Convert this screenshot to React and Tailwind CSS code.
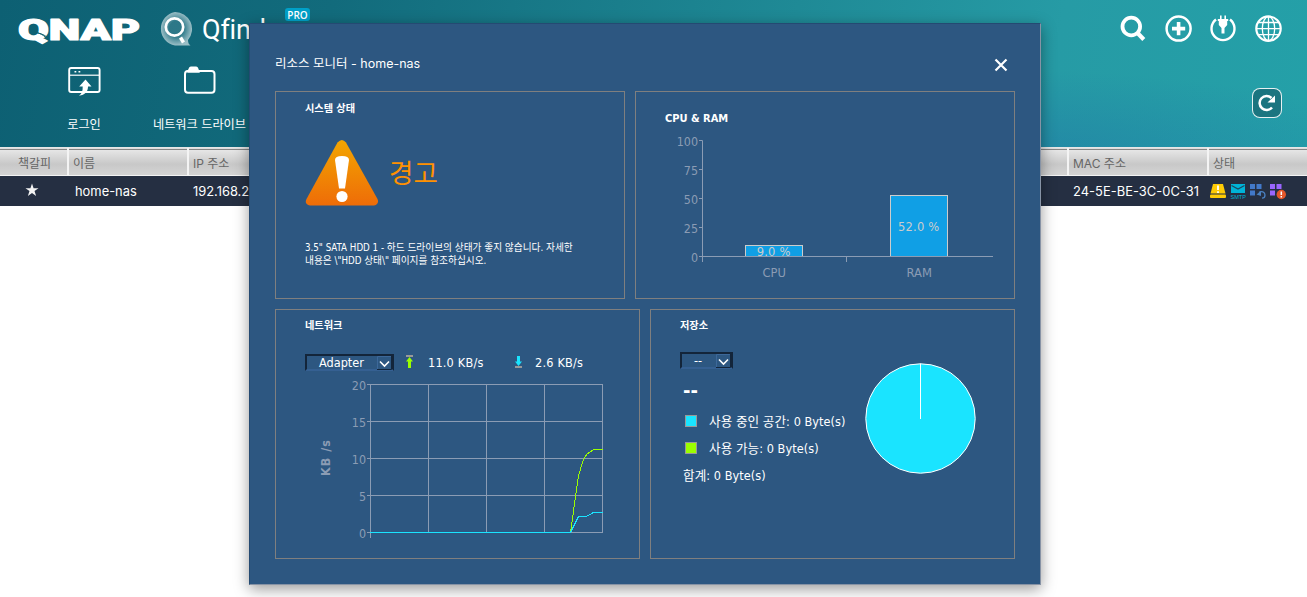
import React from "react";

const UI = "font-['Inter','Noto_Sans_CJK_KR',sans-serif]";
const DLG = "font-['DejaVu_Sans_Condensed','Noto_Sans_CJK_KR',sans-serif]";

function Logo() {
  return (
    <svg className="block h-[40px] w-[126px]" viewBox="16 9 126 40">
      <text x="18" y="39.5" textLength="122" lengthAdjust="spacingAndGlyphs" fontFamily="Roboto, sans-serif" fontWeight="900" fontSize="29" fill="#fff" stroke="#fff" strokeWidth="1.2" strokeLinejoin="round">QNAP</text>
      <path d="M34 32c6 1 10 3 14 8M38 33c5 1 8 3 11 6" fill="none" stroke="#10616f" strokeWidth="1" />
    </svg>
  );
}

function FinderMark() {
  return (
    <svg className="block h-[36px] w-[36px]" viewBox="158 11 36 36">
      <defs>
        <radialGradient id="lens">
          <stop offset=".45" stopColor="#fff" stopOpacity=".12" />
          <stop offset="1" stopColor="#fff" stopOpacity=".58" />
        </radialGradient>
      </defs>
      <path d="M176 12a17 17 0 0 1 13 28q0 4 2.500 5.500H176a17 17 0 0 1 0-33.500Z" fill="url(#lens)" />
      <circle cx="175.500" cy="27" r="8.700" fill="none" stroke="#fff" strokeWidth="2.700" />
      <path d="m181.500 37.500 3 5" stroke="#fff" strokeWidth="3.500" />
    </svg>
  );
}

function ToolIcons() {
  return (
    <svg className="block h-[32px] w-[170px]" viewBox="1116 12 170 32" fill="none" stroke="#fff">
      <circle cx="1131.300" cy="26.500" r="8.800" strokeWidth="3.800" />
      <path d="m1137.500 33 6.300 6.500" strokeWidth="4.200" />
      <circle cx="1178.600" cy="28.600" r="12" strokeWidth="2.500" />
      <path d="M1178.600 22v13.200M1172 28.600h13.200" strokeWidth="3.600" />
      <path d="M1216 19.500a11.500 11.500 0 1 0 14 0" strokeWidth="2.400" />
      <path d="M1220.800 15.500v5M1225.200 15.500v5" strokeWidth="1.600" />
      <path d="M1217.800 19h10.400v2h-1v4l-2.700 3v5.500h-3V28l-2.700-3v-4h-1z" fill="#fff" stroke="none" />
      <circle cx="1268.500" cy="28.600" r="12.200" strokeWidth="2.200" />
      <path d="M1268.500 16.500v24M1256.500 28.600h24M1258 22.500h21M1258 34.700h21" strokeWidth="1.300" />
      <ellipse cx="1268.500" cy="28.600" rx="6.200" ry="12" strokeWidth="1.300" />
    </svg>
  );
}

function LoginIcon() {
  return (
    <svg className="block h-[32px] w-[34px]" viewBox="67 65 34 32" fill="none" stroke="#fff">
      <rect x="69.200" y="68" width="30.400" height="24" rx="2" strokeWidth="1.900" />
      <path d="M70 75.200h29" strokeWidth="1.200" />
      <path d="M74.500 71.700h1.800M78.500 71.700h1.800" strokeWidth="1.600" />
      <path d="M85.500 79.500l6 7H88c0 5-3 8.500-9 9.300 3-2.300 3.800-5 3.700-9.300h-3.500z" fill="#fff" stroke="none" />
    </svg>
  );
}

function FolderIcon() {
  return (
    <svg className="block h-[32px] w-[34px]" viewBox="183 65 34 32">
      <path d="M186.500 70.500c1 0 1.500 0 2-1.500s1-2.500 2.500-2.500h5c1.500 0 2 1 2.500 2.500s1 1.700 2 1.700l-1 2h-12z" fill="#fff" />
      <rect x="185" y="71" width="29.500" height="21.800" rx="3" fill="none" stroke="#fff" strokeWidth="2" />
    </svg>
  );
}

function StatusIcons() {
  return (
    <svg className="block h-[20px] w-[80px]" viewBox="1208 181 80 20">
      <path d="M1213 184h10l2.500 9.500h-15z" fill="#ffcb05" />
      <rect x="1210" y="194.500" width="16" height="3.500" rx="1" fill="#ffcb05" />
      <path d="M1218 185.500v4.500M1218 191.200v1.800" stroke="#fff" strokeWidth="1.800" />
      <rect x="1231" y="184" width="14" height="9" fill="#00b4d8" />
      <path d="m1231.500 185.500 6.500 3.500 6.500-3.500" fill="none" stroke="#1c4960" strokeWidth="1.200" />
      <text x="1230.500" y="199" textLength="15.500" lengthAdjust="spacingAndGlyphs" fill="#00b4d8" fontFamily="Liberation Sans, sans-serif" fontSize="6">SMTP</text>
      <path d="M1250 184h5v5h-5zM1256.500 184h5v5h-5zM1250 190.500h5v5h-5z" fill="#4279c9" />
      <path d="M1259 192.500c2.500-2 6-.5 6 2.500 0 2-1.500 3.200-3 3.200" fill="none" stroke="#4a80c0" strokeWidth="1.300" />
      <path d="m1256.500 194.500 4.500-3.500v5z" fill="#4a80c0" />
      <path d="M1270 184h5v5h-5zM1276.500 184h5v5h-5zM1270 190.500h5v5h-5z" fill="#9966ff" />
      <circle cx="1281.300" cy="194.500" r="4.700" fill="#e4572a" />
      <path d="M1281.300 191.500v3.500M1281.300 196v1.500" stroke="#fff" strokeWidth="1.500" />
    </svg>
  );
}

function Tool({ icon, label, className }) {
  return (
    <div className={"flex shrink-0 flex-col items-center " + className}>
      {icon}
      <span className="mt-[19px] text-[12.2px] leading-[18px] whitespace-nowrap text-white">{label}</span>
    </div>
  );
}

function Header() {
  return (
    <header className="flex h-[147px] justify-between bg-[radial-gradient(ellipse_420px_90px_at_1000px_160px,rgba(30,110,165,0.45),transparent),linear-gradient(100deg,#0d6073_0%,#126b7c_25%,#1f8a96_60%,#269ba5_80%,#24a0a8_100%)]">
      <div className="flex flex-col">
        <div className="flex h-[56px] items-start pt-[9px] pl-[16px]">
          <Logo />
          <div className="mt-[2px] ml-[15px]"><FinderMark /></div>
          <span className="mt-[5px] ml-[9px] w-[83px] font-['Roboto'] text-[27px] leading-[32px] font-normal tracking-[-0.2px] text-white">Qfinder</span>
          <span className="-mt-px h-[13px] w-[25px] rounded-[3px] bg-[#00a0c8] text-center font-['Open_Sans'] text-[10px] leading-[14px] font-semibold text-white">PRO</span>
        </div>
        <div className="flex pt-[9px]">
          <Tool className="ml-[34px] w-[100px]" label="로그인" icon={<LoginIcon />} />
          <Tool className="ml-[15px] w-[101px]" label="네트워크 드라이브" icon={<FolderIcon />} />
        </div>
      </div>
      <div className="flex flex-col items-end pt-[12px] pr-[21px]">
        <ToolIcons />
        <div className="mt-[44px] mr-[4px] flex h-[30px] w-[30px] items-center justify-center rounded-[8px] border border-white/90 bg-[#1b7580]">
          <svg className="h-[22px] w-[22px]" viewBox="0 0 22 22">
            <path d="M16 15.500A7 7 0 1 1 15.500 6" fill="none" stroke="#fff" strokeWidth="2.500" />
            <path d="M19 3.500v7h-7.500z" fill="#fff" />
          </svg>
        </div>
      </div>
    </header>
  );
}

function Head({ children, className }) {
  return <div className={"shrink-0 border-r-2 border-[#f4f4f4] pt-[4px] text-[12px] leading-[23px] whitespace-nowrap text-[#666] " + className}>{children}</div>;
}

function DeviceTable() {
  return (
    <div>
      <div className="flex h-[29px] border-t border-b border-t-[#e6e6e6] border-b-[#f4f4f4] bg-[linear-gradient(to_bottom,#dedede_0,#dedede_1px,#858585_1px,#858585_2px,#e6e6e6_2px,#c8c8c8_60%,#d4d4d4_100%)]">
        <Head className="w-[69px] pl-[18px]">책갈피</Head>
        <Head className="w-[120px] pl-[4px]">이름</Head>
        <Head className="w-[880px] pl-[4px]">IP 주소</Head>
        <Head className="w-[140px] pl-[4px]">MAC 주소</Head>
        <div className="pt-[4px] pl-[4px] text-[12px] leading-[23px] text-[#666]">상태</div>
      </div>
      <div className="flex h-[30px] items-center bg-[#252f42] text-[12.9px] text-white">
        <div className="w-[75px] pl-[25px]">
          <svg className="-mt-[2px] block h-[14px] w-[14px]" viewBox="0 0 15 15"><path d="m7.500.5 1.700 5h5.300l-4.300 3.200 1.700 5.300-4.400-3.200L3.100 14l1.700-5.300L.5 5.500h5.300z" fill="#f4f4f4" /></svg>
        </div>
        <div className="w-[118px] pt-[2px]">home-nas</div>
        <div className="w-[880px] pt-[2px]">192.168.2.10</div>
        <div className="w-[135px] pt-[2px] tracking-[0.05px] whitespace-nowrap">24-5E-BE-3C-0C-31</div>
        <StatusIcons />
      </div>
    </div>
  );
}

function Panel({ className, children }) {
  return <section className={"shrink-0 overflow-hidden border border-[#7f7f7f] " + className}>{children}</section>;
}

function Select({ label, className }) {
  return (
    <div className={"flex shrink-0 justify-between border-2 border-t-[#13253a] border-r-[#13253a] border-b-[#356092] border-l-[#13253a] text-white " + className}>
      <span className="pl-[12px] leading-[13px]">{label}</span>
      <svg className="block h-[14px] w-[15px] shrink-0" viewBox="0 0 15 14" fill="none">
        <path d="M.5 13V.5H14" stroke="#3c6899" />
        <path d="M0 13.500h14.500V0" stroke="#13253a" />
        <path d="m3 5.500 4.500 4.500L12 5.500" stroke="#fff" strokeWidth="1.600" />
      </svg>
    </div>
  );
}

function SystemPanel() {
  return (
    <Panel className="h-[208px] w-[350px] pl-[29px]">
      <h2 className="mt-[9px] text-[10.2px] leading-[16px] font-bold text-white">시스템 상태</h2>
      <div className="mt-[22px] flex h-[68px] items-center">
        <svg className="block h-[68px] w-[74px]" viewBox="305 139 74 68">
          <defs><linearGradient id="warn" x1="0" y1="0" x2="0" y2="1"><stop stopColor="#f3a600" /><stop offset="1" stopColor="#ee6c08" /></linearGradient></defs>
          <path d="M337.500 142.500q4.500-5 8.500 0l31.500 56.500q2 5-3.500 6.500H310q-6-1.500-3.500-6.500z" fill="url(#warn)" />
          <path d="M335 160q0-4 7-4t7 4l-4 28.500h-6z" fill="#fff" />
          <circle cx="342" cy="196.500" r="5.600" fill="#fff" />
        </svg>
        <span className="mt-px ml-[10px] text-[26.500px] leading-[34px] text-[#ff9100]">경고</span>
      </div>
      <p className="mt-[34px] text-[9.7px] leading-[13px] whitespace-nowrap text-white">
        3.5" SATA HDD 1 - 하드 드라이브의 상태가 좋지 않습니다. 자세한<br />
        내용은 \"HDD 상태\" 페이지를 참조하십시오.
      </p>
    </Panel>
  );
}

const usage = [
  { name: "CPU", text: "9.0 %", x: 745.5, y: 245.5, ty: 256 },
  { name: "RAM", text: "52.0 %", x: 890.5, y: 195.5, ty: 231 },
];

function CpuPanel() {
  return (
    <Panel className="h-[208px] w-[380px]">
      <h2 className="mt-[19px] ml-[29px] h-[15px] text-[11px] leading-[15px] font-bold text-white">CPU &amp; RAM</h2>
      <svg className="block h-[172px] w-[378px]" viewBox="636 126 378 172" fontSize="12.8" fill="#8b9cb4">
        <path d="M699 140.500h3.500V262M699 169.500h3M699 198.500h3M699 227.500h3M846.500 257v5" fill="none" stroke="#8b9cb4" />
        {[100, 75, 50, 25, 0].map((v, i) => <text key={v} x="698" y={146 + i * 29} fontSize="12.4" textAnchor="end">{v}</text>)}
        {usage.map((u) => (
          <g key={u.name} textAnchor="middle">
            <rect x={u.x} y={u.y} width="57" height={256.5 - u.y} fill="#109fe5" stroke="#ccc" />
            <text x={u.x + 28.2} y={u.ty} fill="#ccc" letterSpacing=".2">{u.text}</text>
            <text x={u.x + 28.700} y="277">{u.name}</text>
          </g>
        ))}
        <path d="M699 256.500h294" stroke="#8b9cb4" />
      </svg>
    </Panel>
  );
}

function NetworkPanel() {
  return (
    <Panel className="h-[250px] w-[365px]">
      <h2 className="mt-[8px] ml-[29px] text-[10.2px] leading-[16px] font-bold text-white">네트워크</h2>
      <div className="mt-[19px] flex h-[20px] items-start pl-[29px] text-[12.6px] text-white">
        <Select className="mt-px h-[17px] w-[89px]" label="Adapter" />
        <svg className="mt-[2px] ml-[11px] block h-[14px] w-[9px]" viewBox="0 0 9 14"><path d="M1 1h7" stroke="#999" strokeWidth="2" /><path d="M4.500 2 8 6.500H6V13H3V6.500H1z" fill="#9bff00" /></svg>
        <span className="ml-[14px] w-[72px] leading-[20px] tracking-[0.2px] whitespace-nowrap">11.0 KB/s</span>
        <svg className="mt-[2px] ml-[14px] block h-[14px] w-[9px]" viewBox="0 0 9 14"><path d="M1 12h7" stroke="#999" strokeWidth="2" /><path d="M4.500 11 8 6.500H6V1H3V6.500H1z" fill="#1ae4ff" /></svg>
        <span className="ml-[12px] leading-[20px] tracking-[0.2px] whitespace-nowrap">2.6 KB/s</span>
      </div>
      <svg className="block h-[180px] w-[363px]" viewBox="276 373 363 180" fontSize="12.4" fill="#8b9cb4">
        <g stroke="#8b9cb4">
          {[384.5, 421.5, 458.5, 495.5, 532.5].map((y) => <path key={y} d={`M367 ${y}H603`} />)}
          {[428.5, 486.5, 544.5, 602.5].map((x) => <path key={x} d={`M${x} 384V533`} />)}
          <path d="M370.500 384V538" />
        </g>
        {[20, 15, 10, 5, 0].map((v, i) => <text key={v} x="366" y={390 + i * 37} textAnchor="end">{v}</text>)}
        <text transform="translate(330 476) rotate(-90)" fontWeight="700" textLength="36">KB /s</text>
        <g fill="none" shapeRendering="crispEdges">
          <path d="M570.500 532.500 578.500 475.500 583 461 586.500 454.500 593.500 449.500H603" stroke="#9bff00" />
          <path d="M370 532.500H570.500L578.500 516.500H586.500L593.500 512.500H603" stroke="#1ae4ff" />
        </g>
      </svg>
    </Panel>
  );
}

function StoragePanel() {
  return (
    <Panel className="flex h-[250px] w-[365px] pl-[29px]">
      <div className="w-[185px] shrink-0 text-[12.6px] whitespace-nowrap text-white">
        <h2 className="mt-[8px] text-[10.2px] leading-[16px] font-bold">저장소</h2>
        <Select className="mt-[18px] h-[17px] w-[53px]" label="--" />
        <div className="mt-[12px] ml-[3px] text-[20px] leading-[18px] font-bold">--</div>
        <div className="mt-[14px] ml-[5px] flex h-[18px] items-center">
          <span className="-mt-[2px] h-[12px] w-[12px] border border-[#999] bg-[#1ae4ff]" />
          <span className="ml-[12px] tracking-[0.05px]">사용 중인 공간: 0 Byte(s)</span>
        </div>
        <div className="mt-[9px] ml-[5px] flex h-[18px] items-center">
          <span className="-mt-[2px] h-[12px] w-[12px] border border-[#999] bg-[#9bff00]" />
          <span className="ml-[12px] tracking-[0.05px]">사용 가능: 0 Byte(s)</span>
        </div>
        <div className="mt-[9px] ml-[3px] leading-[18px] tracking-[0.05px]">합계: 0 Byte(s)</div>
      </div>
      <svg className="mt-[52px] block h-[112px] w-[112px] shrink-0" viewBox="865 362 112 112">
        <circle cx="920.500" cy="418.500" r="54.700" fill="#1ae4ff" stroke="#fff" />
        <path d="M920.500 363.500v55.500" stroke="#fff" />
      </svg>
    </Panel>
  );
}

function ResourceMonitor() {
  return (
    <div className={"absolute top-[23px] left-[249px] h-[562px] w-[792px] border border-t-[#244a72] border-r-[#8793a5] border-b-[#8793a5] border-l-[#244a72] bg-[#2d5781] pr-[25px] pl-[25px] shadow-[0_4px_14px_rgba(0,0,0,0.4)] " + DLG}>
      <div className="flex h-[67px] items-center justify-between pt-[14px]">
        <span className={"-mt-px text-[12.5px] leading-[18px] text-white " + UI}>리소스 모니터 - home-nas</span>
        <svg className="mt-[1px] mr-[7px] h-[14px] w-[14px]" viewBox="0 0 14 14"><path d="m1.500 1.500 11 11M12.500 1.500l-11 11" stroke="#fff" strokeWidth="2.200" /></svg>
      </div>
      <div className="flex justify-between"><SystemPanel /><CpuPanel /></div>
      <div className="mt-[10px] flex justify-between"><NetworkPanel /><StoragePanel /></div>
    </div>
  );
}

export default function App() {
  return (
    <main className={"relative h-[597px] w-[1307px] overflow-hidden bg-white " + UI}>
      <Header />
      <DeviceTable />
      <ResourceMonitor />
    </main>
  );
}
